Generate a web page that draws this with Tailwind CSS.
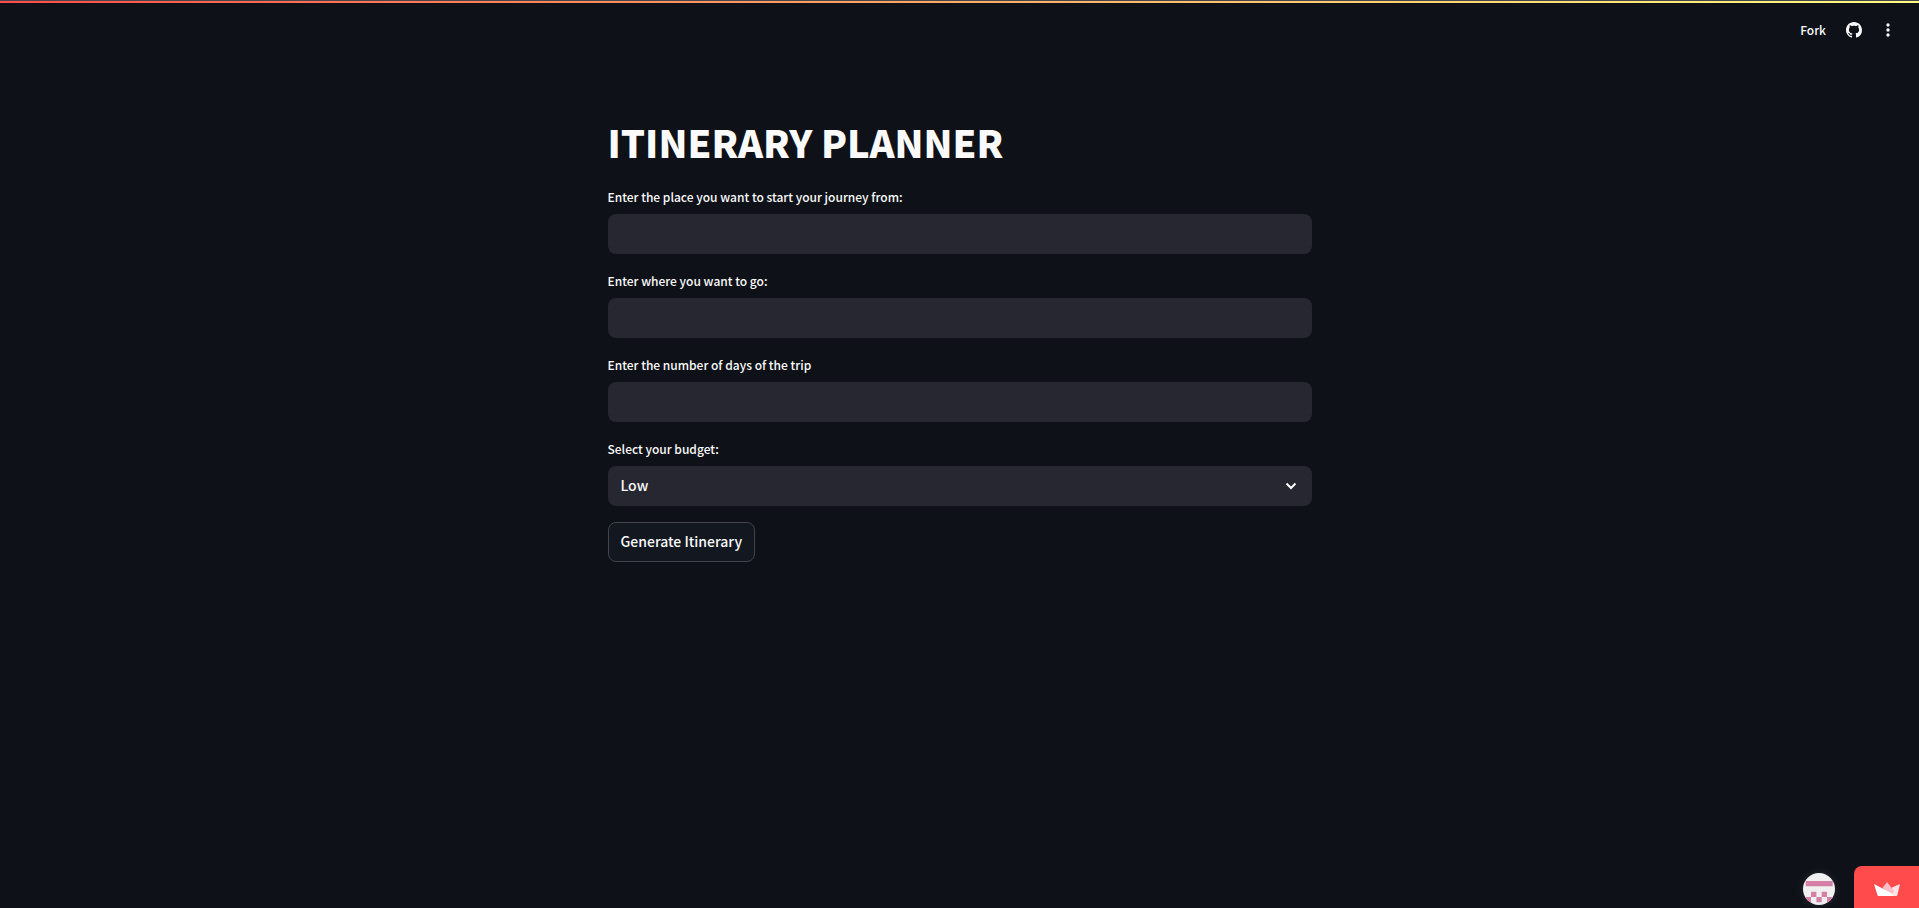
<!DOCTYPE html>
<html lang="en">
<head>
<meta charset="utf-8">
<meta name="viewport" content="width=device-width, initial-scale=1">
<title>Itinerary Planner</title>
<script src="https://cdn.jsdelivr.net/npm/@tailwindcss/browser@4"></script>
</head>
<body class="flex min-h-screen flex-col bg-[#0e1117] font-['Noto_Sans_CJK_SC','Noto_Sans',sans-serif] text-[#fafafa]">
  <div class="h-px bg-[#45454d]"></div>
  <div class="h-0.5 bg-linear-to-r from-[#ff4b4b] to-[#fffd80]"></div>

  <header class="flex h-[54px] items-center justify-end gap-4 pr-[21px]">
    <button type="button" class="mr-1 text-xs leading-6 font-medium">Fork</button>
    <button type="button" aria-label="View source on GitHub">
      <svg class="size-4" viewBox="0 0 16 16" fill="currentColor" aria-hidden="true"><path d="M8 0C3.58 0 0 3.58 0 8c0 3.54 2.29 6.53 5.47 7.59.4.07.55-.17.55-.38 0-.19-.01-.82-.01-1.49-2.01.37-2.53-.49-2.69-.94-.09-.23-.48-.94-.82-1.13-.28-.15-.68-.52-.01-.53.63-.01 1.08.58 1.23.82.72 1.21 1.87.87 2.33.66.07-.52.28-.87.51-1.07-1.78-.2-3.64-.89-3.64-3.95 0-.87.31-1.59.82-2.15-.08-.2-.36-1.02.08-2.12 0 0 .67-.21 2.2.82.64-.18 1.32-.27 2-.27s1.36.09 2 .27c1.53-1.04 2.2-.82 2.2-.82.44 1.1.16 1.92.08 2.12.51.56.82 1.27.82 2.15 0 3.07-1.87 3.75-3.65 3.95.29.25.54.73.54 1.48 0 1.07-.01 1.93-.01 2.2 0 .21.15.46.55.38A8.01 8.01 0 0 0 16 8c0-4.42-3.58-8-8-8z"/></svg>
    </button>
    <button type="button" aria-label="Main menu">
      <svg class="size-5" viewBox="0 0 24 24" fill="currentColor" aria-hidden="true"><path d="M12 8a2 2 0 1 0 0-4 2 2 0 0 0 0 4zm0 2a2 2 0 1 0 0 4 2 2 0 0 0 0-4zm0 6a2 2 0 1 0 0 4 2 2 0 0 0 0-4z"/></svg>
    </button>
  </header>

  <main class="mx-auto w-full max-w-[736px] px-4 pt-[59px]">
    <h1 class="mb-[18px] text-[38px] leading-[51px] font-black">ITINERARY PLANNER</h1>
    <form>
      <div class="mb-[15px] flex flex-col gap-[5px]">
        <label for="start" class="text-xs leading-6 font-medium">Enter the place you want to start your journey from:</label>
        <input id="start" type="text" class="h-10 w-full rounded-lg bg-[#262730] px-3 text-sm outline-none">
      </div>
      <div class="mb-[15px] flex flex-col gap-[5px]">
        <label for="destination" class="text-xs leading-6 font-medium">Enter where you want to go:</label>
        <input id="destination" type="text" class="h-10 w-full rounded-lg bg-[#262730] px-3 text-sm outline-none">
      </div>
      <div class="mb-[15px] flex flex-col gap-[5px]">
        <label for="days" class="text-xs leading-6 font-medium">Enter the number of days of the trip</label>
        <input id="days" type="text" class="h-10 w-full rounded-lg bg-[#262730] px-3 text-sm outline-none">
      </div>
      <div class="mb-4 flex flex-col gap-[5px]">
        <label for="budget" class="text-xs leading-6 font-medium">Select your budget:</label>
        <div class="relative">
          <select id="budget" class="block h-10 w-full appearance-none rounded-lg bg-[#262730] px-[13px] pb-0.5 text-sm font-medium outline-none">
            <option>Low</option>
            <option>Medium</option>
            <option>High</option>
          </select>
          <svg class="pointer-events-none absolute top-[10px] right-[11px] size-5" viewBox="0 0 20 20" fill="none" stroke="currentColor" stroke-width="2" aria-hidden="true"><path d="M5.500 7.500 10 12l4.500-4.500"/></svg>
        </div>
      </div>
      <button type="button" class="h-10 rounded-lg border border-[#41444c] bg-[#131720] px-3 pb-0.5 text-sm font-medium">Generate Itinerary</button>
    </form>
  </main>

  <footer class="mt-auto flex items-end justify-end gap-[19px]">
    <a href="#profile" aria-label="Creator profile" class="mb-[3px] size-8 overflow-hidden rounded-full bg-[#f0f0f0] shadow-[0_0_10px_rgba(255,255,255,0.1)]">
      <svg class="size-8" viewBox="0 0 32 32" fill="#d680a8" aria-hidden="true"><path d="M2.700 8h27v5.300h-27zM8 18.700h5.400V24H8zM18.700 18.700H24V24h-5.300zM0 24h8v5.300H0zM13.400 24h5.300v5.300h-5.300zM24 24h8v5.300h-8z"/></svg>
    </a>
    <a href="#streamlit" aria-label="Hosted with Streamlit" class="flex h-[42px] w-[65px] items-center justify-center rounded-tl-lg bg-[#ff4b4b] pt-1">
      <svg class="h-[14px] w-[26px]" viewBox="0 0 26 14" aria-hidden="true">
        <path fill="#ffe3e6" d="M26 2 18 5.500 15 14h7.300q.7 0 1-.7z"/>
        <path fill="#ffbdc6" d="M13 0 8.500 6 17 14l3-5z"/>
        <path fill="#fff" d="M0 2l18 9.500L19 14H4.500q-.7 0-1-.7z"/>
      </svg>
    </a>
  </footer>
</body>
</html>
